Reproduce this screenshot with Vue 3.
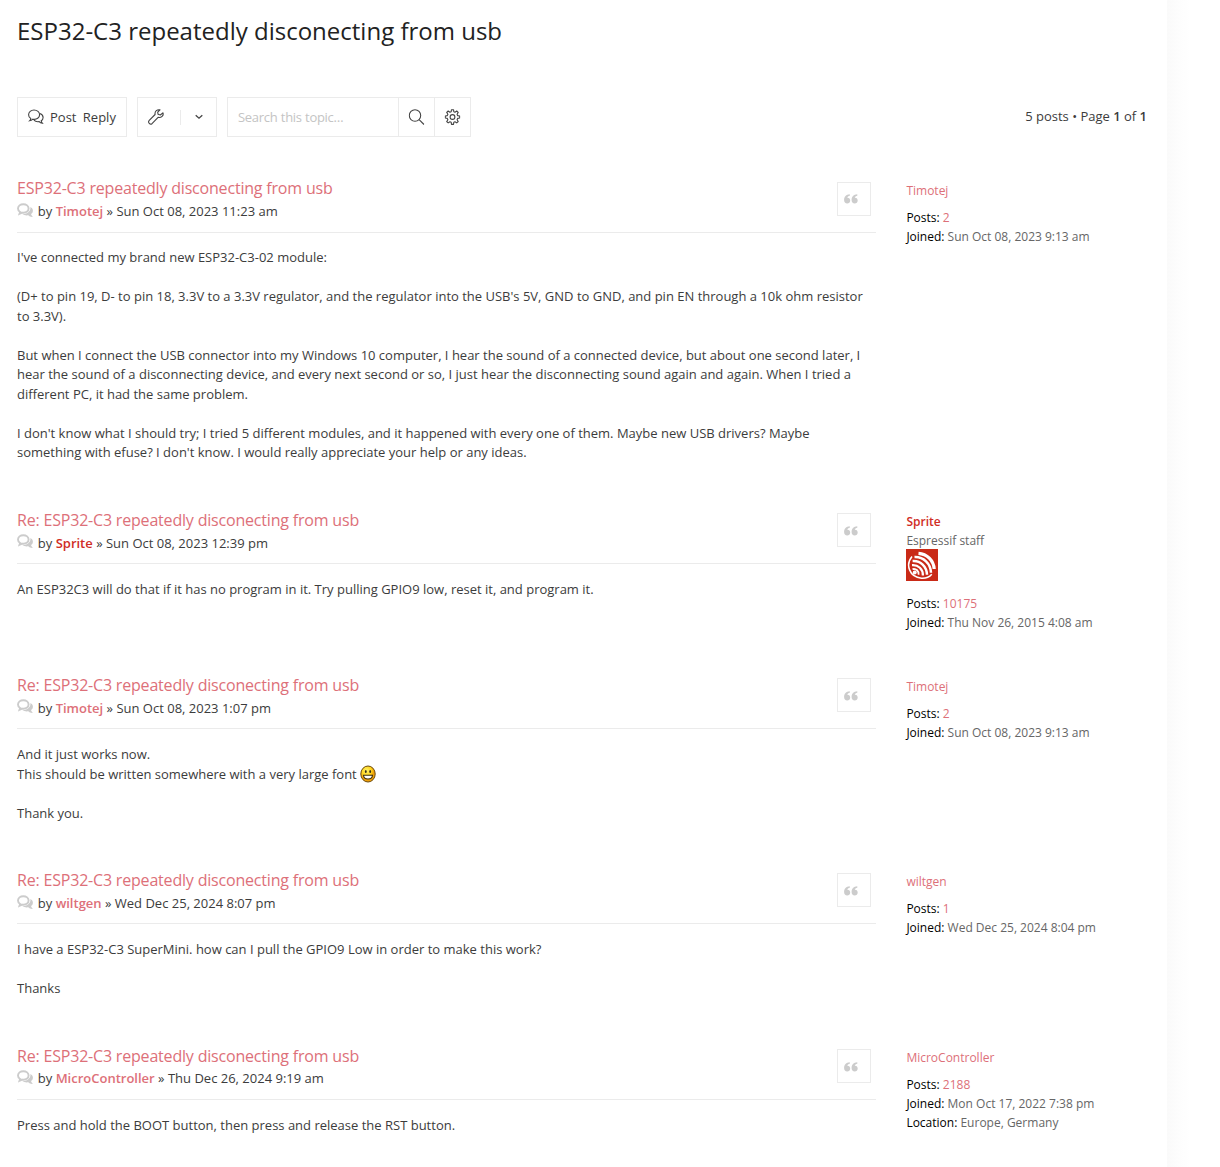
<script setup>
const topic = 'ESP32-C3 repeatedly disconecting from usb'
const posts = [
  {
    title: topic, author: 'Timotej', date: 'Sun Oct 08, 2023 11:23 am', count: '2', joined: 'Sun Oct 08, 2023 9:13 am',
    lines: [
      "I've connected my brand new ESP32-C3-02 module:",
      '',
      "(D+ to pin 19, D- to pin 18, 3.3V to a 3.3V regulator, and the regulator into the USB's 5V, GND to GND, and pin EN through a 10k ohm resistor",
      'to 3.3V).',
      '',
      'But when I connect the USB connector into my Windows 10 computer, I hear the sound of a connected device, but about one second later, I',
      'hear the sound of a disconnecting device, and every next second or so, I just hear the disconnecting sound again and again. When I tried a',
      'different PC, it had the same problem.',
      '',
      "I don't know what I should try; I tried 5 different modules, and it happened with every one of them. Maybe new USB drivers? Maybe",
      "something with efuse? I don't know. I would really appreciate your help or any ideas.",
    ],
  },
  {
    title: 'Re: ' + topic, author: 'Sprite', staff: true, date: 'Sun Oct 08, 2023 12:39 pm', count: '10175', joined: 'Thu Nov 26, 2015 4:08 am',
    lines: ['An ESP32C3 will do that if it has no program in it. Try pulling GPIO9 low, reset it, and program it.'],
  },
  {
    title: 'Re: ' + topic, author: 'Timotej', date: 'Sun Oct 08, 2023 1:07 pm', count: '2', joined: 'Sun Oct 08, 2023 9:13 am',
    lines: ['And it just works now.', 'This should be written somewhere with a very large font', '', 'Thank you.'],
    smileyLine: 1,
  },
  {
    title: 'Re: ' + topic, author: 'wiltgen', date: 'Wed Dec 25, 2024 8:07 pm', count: '1', joined: 'Wed Dec 25, 2024 8:04 pm',
    lines: ['I have a ESP32-C3 SuperMini. how can I pull the GPIO9 Low in order to make this work?', '', 'Thanks'],
  },
  {
    title: 'Re: ' + topic, author: 'MicroController', date: 'Thu Dec 26, 2024 9:19 am', count: '2188', joined: 'Mon Oct 17, 2022 7:38 pm', location: 'Europe, Germany',
    lines: ['Press and hold the BOOT button, then press and release the RST button.'],
  },
]
</script>

<template>
  <div class="page">
    <main class="wrap">
      <h1>{{ topic }}</h1>
      <div class="bar">
        <button class="btn reply">
          <svg width="16" height="16" viewBox="0 0 16 16" fill="none" stroke="#444" stroke-width="1.1">
            <path d="M6 1C3 1 .6 3.1.6 5.7c0 1.7.8 3 2.2 3.800-.1.9-.5 1.6-1.2 2.3 1.4-.2 2.4-.8 3.2-1.6 4.1.7 6.8-1.6 6.8-4.5C11.600 3.1 9.2 1 6 1Z" />
            <path d="M12 4.4c1.9.8 3.1 2.3 3.1 4 0 1.5-.7 2.600-1.900 3.400.1.9.5 1.7 1.2 2.5-1.400-.2-2.500-.8-3.200-1.700-2.200.4-4-.1-5.300-1.400" />
          </svg>
          <span>Post Reply</span>
        </button>
        <button class="btn tools">
          <svg width="16" height="16" viewBox="0 0 16 16" fill="none" stroke="#444" stroke-width="1.1" stroke-linejoin="round">
            <path d="M14.9 3.8 12.3 6 10.1 5.3 9.7 3.2 12 .8C9.3.2 6.5 2.2 7.1 5.5L1 11.7C-.3 13.5 2 16 4 14.7l6.1-6.3C13.2 9.2 16 6.6 14.9 3.8Z" />
          </svg>
          <i class="sep"></i>
          <svg class="chev" width="8" height="6" viewBox="0 0 8 6" fill="none" stroke="#444" stroke-width="1.3"><path d="m.7 1.2 3.3 3 3.3-3" /></svg>
        </button>
        <div class="search">
          <span class="ph">Search this topic…</span>
          <button>
            <svg width="16" height="16" viewBox="0 0 16 16" fill="none" stroke="#444" stroke-width="1.1"><circle cx="6.500" cy="6.500" r="5.700" /><path d="m10.600 10.600 4.900 4.900" /></svg>
          </button>
          <button>
            <svg width="16" height="16" viewBox="0 0 16 16" fill="none" stroke="#444" stroke-width="1.1" stroke-linejoin="round">
              <path d="M6.7 2.7 7 .7h2l.3 2 1.2.5L12.2 2l1.5 1.5-1.1 1.8.5 1.3 2.1.4v2l-2.1.4-.5 1.3 1.1 1.8-1.5 1.4-1.7-1.1-1.2.5-.3 2.1H7l-.3-2.1-1.3-.5-1.7 1.1-1.5-1.4 1.2-1.8-.6-1.3L.8 9V7l2-.4.6-1.3-1.2-1.8L3.7 2l1.7 1.2Z" />
              <circle cx="8" cy="8" r="2.4" />
            </svg>
          </button>
        </div>
        <div class="pages">5 posts • Page <b>1</b> of <b>1</b></div>
      </div>

      <article v-for="(p, i) in posts" :key="i" class="post">
        <section class="content">
          <header>
            <div class="heading">
              <h2>{{ p.title }}</h2>
              <p class="meta">
                <svg width="16" height="15" viewBox="0 0 16 15" fill="none" stroke="#ccc">
                  <path stroke-width="1.9" d="M6.3 1.2C3.3 1.2 1 3.1 1 5.5c0 1.6.8 2.8 2.1 3.5l-.6 1.8L5.2 9.6c3.7.5 6.4-1.4 6.4-4.1 0-2.4-2.3-4.3-5.3-4.3Z" />
                  <path fill="#ccc" stroke="none" d="M13.4 4c1.6.8 2.5 2.1 2.5 3.8 0 1.4-.7 2.5-1.9 3.3.2.9.7 1.700 1.5 2.400.3.3.1.7-.3.6-1.600-.1-2.900-.8-3.900-1.800-2.300.4-4.400-.1-5.900-1.300 5 .1 8.500-2.600 8-7Z" />
                </svg>
                <span>by <b :class="{ staff: p.staff }">{{ p.author }}</b> » {{ p.date }}</span>
              </p>
            </div>
            <button class="quote">
              <svg width="14" height="10" viewBox="0 0 14 10" fill="#ccc">
                <path d="M5.8.3v1.5C4.3 2 3.5 2.7 3.3 3.8 5 3.6 6.2 4.8 6.2 6.5S4.9 9.6 3.2 9.6C1.3 9.6.1 8.2.1 6.1.1 2.8 2.1.4 5.8.3Z" />
                <path d="M13.3.3v1.5c-1.5.2-2.3.9-2.5 2 1.7-.2 2.9 1 2.9 2.7s-1.3 3.1-3 3.1c-1.9 0-3.1-1.4-3.1-3.5 0-3.3 2-5.7 5.7-5.8Z" />
              </svg>
            </button>
          </header>
          <div class="body">
            <div v-for="(l, n) in p.lines" :key="n" class="line">{{ l }}<svg v-if="p.smileyLine === n" class="smiley" width="16" height="18" viewBox="0 0 16 18">
              <defs><radialGradient id="face" cx=".4" cy=".3"><stop stop-color="#fff36b" /><stop offset=".65" stop-color="#ffd51e" /><stop offset="1" stop-color="#ef9f08" /></radialGradient></defs>
              <ellipse cx="8" cy="9" rx="7.2" ry="8" fill="url(#face)" stroke="#6b4b10" />
              <ellipse cx="5.8" cy="6.4" rx=".9" ry="1.5" fill="#332b19" /><ellipse cx="10.2" cy="6.4" rx=".9" ry="1.5" fill="#332b19" />
              <path d="M3.500 10.200h9c-.2 2.500-2 3.800-4.500 3.800S3.700 12.700 3.500 10.200Z" fill="#fff" stroke="#3e3010" stroke-width="1.1" />
            </svg></div>
          </div>
        </section>
        <aside>
          <div><span class="name" :class="{ staff: p.staff }">{{ p.author }}</span></div>
          <template v-if="p.staff">
            <div>Espressif staff</div>
            <svg class="rank" width="32" height="32" viewBox="0 0 32 32">
              <rect width="32" height="32" fill="#c92a17" />
              <g fill="none" stroke="#fff">
                <path d="M6 7.400C-.8 15.600 3.200 27.800 15.400 29.200c4.400.3 8-1.300 10.400-4" stroke-width="1.5" />
                <path d="M12.500 4.300C21 4.800 27.600 11.400 28.200 20" stroke-width="3.200" />
                <path d="M8.500 8C17.400 7.600 24.800 14.600 25 23.800" stroke-width="2.500" />
                <path d="M6.600 12C14.500 11.400 20.800 17.500 21 25.800" stroke-width="2.500" />
                <path d="M6 16.100c6.300-.5 11 4.200 10.900 10.300" stroke-width="2.300" />
                <path d="M6.500 20.200c3.500-1 6.800 2 6 5.600" stroke-width="1.800" />
              </g>
              <circle cx="8.700" cy="23.500" r="2" fill="#fff" />
            </svg>
          </template>
          <div class="stats">
            <div><strong>Posts:</strong> <a>{{ p.count }}</a></div>
            <div><strong>Joined:</strong> {{ p.joined }}</div>
            <div v-if="p.location"><strong>Location:</strong> {{ p.location }}</div>
          </div>
        </aside>
      </article>
    </main>
    <div class="edge"></div>
  </div>
</template>

<style>
body { margin: 0; background: #fff; overflow: hidden; }
</style>

<style scoped>
* { box-sizing: border-box; }
.page { display: flex; width: 1220px; height: 1167px; overflow: hidden; background: #fff; font: 13px/19.5px 'Open Sans', sans-serif; color: #3c3c3c; }
.wrap { width: 1167px; padding: 0 20px 0 17px; }
.edge { flex: 1; background: linear-gradient(90deg, #fafafa, #fdfdfd 12px, #fff 24px); }
h1 { margin: 0; padding-top: 14px; height: 97px; font-size: 24px; line-height: 33px; font-weight: 400; color: #222; white-space: nowrap; }
.bar { display: flex; height: 74.5px; align-items: flex-start; }
button { font: inherit; background: none; border: 0; padding: 0; color: inherit; }
.btn { display: flex; align-items: center; height: 40px; border: 1px solid #ebebeb; margin-right: 10px; white-space: nowrap; }
.reply { width: 110px; padding-left: 10px; gap: 6px; word-spacing: 3px; }
.reply span { padding-top: 1px; }
.tools { width: 80px; padding-left: 10px; }
.sep { width: 1px; height: 15px; background: #ebebeb; margin-left: 16px; }
.chev { margin-left: 14px; }
.search { display: flex; width: 244px; height: 40px; border: 1px solid #ebebeb; }
.ph { flex: 1; padding-left: 10px; line-height: 38px; color: #c4c4c4; letter-spacing: -.28px; word-spacing: .2px; }
.search button { width: 36px; border-left: 1px solid #ebebeb; display: flex; align-items: center; justify-content: center; }
.search svg { transform: translateX(-.5px); }
.pages { margin-left: auto; line-height: 38px; }
b { font-weight: 600; }
.post { display: flex; }
.content { width: 859px; padding-bottom: 40.3px; }
header { display: flex; justify-content: space-between; height: 61px; border-bottom: 1px solid #ebebeb; padding: 5.7px 5px 0 0; }
h2 { margin: 0; font-size: 16px; line-height: 22px; font-weight: 400; color: #dd7079; letter-spacing: -.19px; white-space: nowrap; }
.meta { margin: 2.72px 0 0; display: flex; gap: 4.8px; white-space: nowrap; }
.meta svg { margin-top: .8px; }
.meta b { color: #dd7079; }
.meta b.staff, .name.staff { color: #d02d25; font-weight: 600; }
.quote { width: 34px; height: 34px; margin-top: 4.4px; border: 1px solid #ebebeb; padding: 1px 0 0 5.5px; display: flex; align-items: center; }
.body { padding-top: 15.9px; }
.line { height: 19.5px; white-space: nowrap; }
.smiley { vertical-align: top; margin: 0 0 0 3px; }
aside { padding: 9px 0 36px 30.4px; font-size: 12px; line-height: 19px; color: #666; white-space: nowrap; }
.name, aside a { color: #dd7079; }
.rank { display: block; margin: -1px 0 0 -.4px; }
.stats { margin-top: 8px; }
.rank + .stats { margin-top: 13px; }
strong { font-weight: 400; color: #000; }
</style>
